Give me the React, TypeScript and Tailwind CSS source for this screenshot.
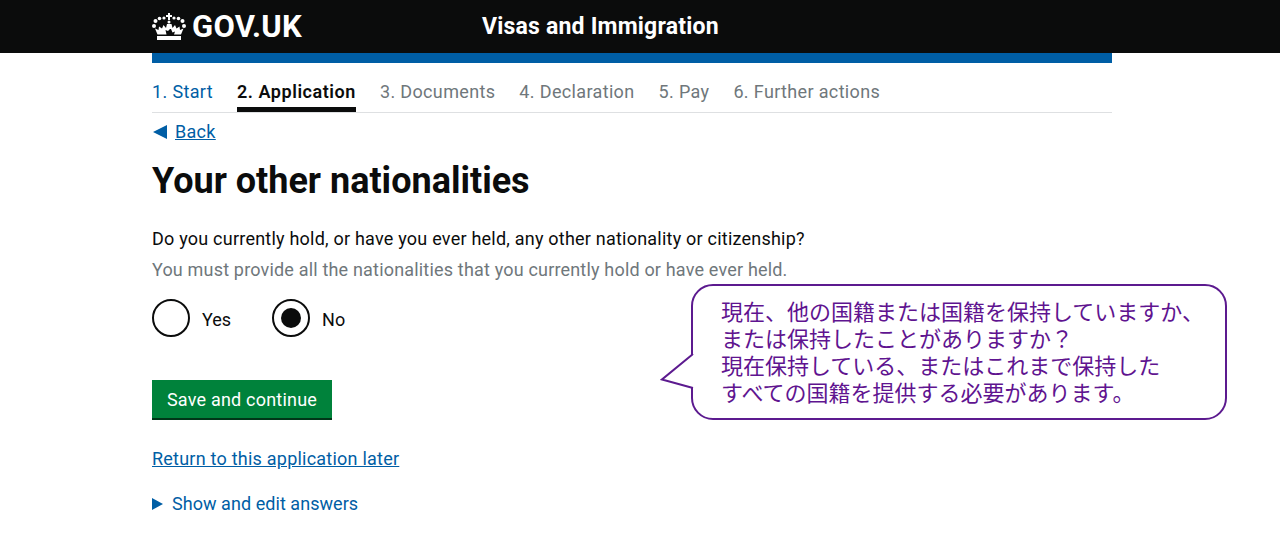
const UI_FONT = 'font-["Roboto",sans-serif]'

function Crown() {
  return (
    <svg width="34" height="27" viewBox="0 0 34 27" fill="#fff" aria-hidden="true">
      <path d="M16 0h2v2h2v2h-2v3h-2V4h-2V2h2z" />
      <circle cx="17" cy="9" r="1.500" />
      <circle cx="12" cy="5" r="1.600" />
      <circle cx="22" cy="5" r="1.600" />
      <circle cx="7.500" cy="5.500" r="1.800" />
      <circle cx="26.500" cy="5.500" r="1.800" />
      <circle cx="3.500" cy="8" r="2" />
      <circle cx="30.500" cy="8" r="2" />
      <circle cx="2" cy="13" r="2" />
      <circle cx="32" cy="13" r="2" />
      <path d="M5 23h24v4H5z" />
      <path d="M5.500 21.500L3 15.500l3.500 1.500.5-3.500 3 2 1.500-3.500 2.500 3 1-4h4.500l1 4 2.500-3 1.500 3.500 3-2 .5 3.500 3.500-1.500-2.500 6h-7l1-3-2.500 1-1.500-3.500h-1L16 18l-2.500-1 1 4.500z" />
    </svg>
  )
}

function Radio({ label, checked }: { label: string; checked?: boolean }) {
  return (
    <div className="flex items-center gap-3">
      <span className="w-[38px] h-[38px] rounded-full border-2 border-[#0b0c0c] flex items-center justify-center">
        {checked && <span className="w-[20px] h-[20px] rounded-full bg-[#0b0c0c]" />}
      </span>
      <span className="pt-[2px] text-[18px] leading-[25px] text-[#0b0c0c]">{label}</span>
    </div>
  )
}

const STEPS = ['1. Start', '2. Application', '3. Documents', '4. Declaration', '5. Pay', '6. Further actions']

export default function App() {
  return (
    <div className={`relative w-[1280px] h-[550px] overflow-hidden bg-white ${UI_FONT}`}>
      <header className="h-[53px] bg-[#0b0c0c] pl-[152px] flex items-center">
        <div className="w-[330px] flex items-center gap-[6px]">
          <Crown />
          <span className="text-[31px] leading-none font-bold text-white tracking-[0.3px]">GOV.UK</span>
        </div>
        <span className="pt-[2px] text-[23px] font-bold text-white tracking-[0.2px]">Visas and Immigration</span>
      </header>

      <main className="w-[960px] ml-[152px]">
        <div className="h-[10px] bg-[#005ea5]" />

        <nav className="h-[50px] flex items-end gap-[24px] border-b border-[#dee0e2]">
          {STEPS.map((s, i) => (
            <span
              key={s}
              className={`h-[39px] pt-[6px] text-[18px] leading-[25px] ${
                i === 1
                  ? 'font-semibold text-[#0b0c0c] border-b-[5px] border-[#0b0c0c] tracking-[0.55px]'
                  : i === 0
                    ? 'text-[#005ea5] tracking-[0.35px]'
                    : 'text-[#6f777b] tracking-[0.35px]'
              }`}
            >
              {s}
            </span>
          ))}
        </nav>

        <a className="mt-[6px] flex items-center gap-[8px] text-[18px] leading-[25px] text-[#005ea5] tracking-[0.3px]">
          <span className="ml-[1px] w-0 h-0 border-y-[7px] border-y-transparent border-r-[14px] border-r-[#005ea5]" />
          <span className="underline">Back</span>
        </a>

        <h1 className="mt-[16px] text-[36px] leading-[42px] font-bold text-[#0b0c0c]">
          Your other nationalities
        </h1>

        <p className="mt-[24px] text-[18px] leading-[25px] text-[#0b0c0c] tracking-[0.22px]">
          Do you currently hold, or have you ever held, any other nationality or citizenship?
        </p>
        <p className="mt-[6px] text-[18px] leading-[25px] text-[#6f777b] tracking-[0.18px]">
          You must provide all the nationalities that you currently hold or have ever held.
        </p>

        <div className="mt-[17px] flex gap-[41px]">
          <Radio label="Yes" />
          <Radio label="No" checked />
        </div>

        <button
          type="button"
          className="mt-[43px] block w-[180px] h-[40px] bg-[#00823b] border-b-2 border-[#003618] text-[18px] leading-[25px] text-white tracking-[0.2px]"
        >
          Save and continue
        </button>

        <a className="mt-[26px] block text-[18px] leading-[25px] text-[#005ea5] underline tracking-[0.23px]">
          Return to this application later
        </a>

        <div className="mt-[20px] flex items-center gap-[9px] text-[18px] leading-[25px] text-[#005ea5] tracking-[0.05px]">
          <span className="w-0 h-0 border-y-[6px] border-y-transparent border-l-[11px] border-l-[#005ea5]" />
          <span>Show and edit answers</span>
        </div>
      </main>

      {/* callout overlay */}
      <div className="absolute left-[691px] top-[284px] w-[536px] h-[136px] rounded-[22px] border-2 border-[#5c1a8f] bg-white pl-[28px] pt-[11px]">
        <svg className="absolute left-[-33px] top-[67px]" width="35" height="42" viewBox="0 0 35 42" aria-hidden="true">
          <path d="M33 1L2 26.500L33 35" fill="#fff" stroke="#5c1a8f" strokeWidth="2" />
          <path d="M33 2h3v32h-3z" fill="#fff" />
        </svg>
        <p className='font-["Noto_Sans_CJK_JP",sans-serif] font-normal text-[22px] leading-[27px] text-[#5f1490] whitespace-pre'>
          {'現在、他の国籍または国籍を保持していますか、\nまたは保持したことがありますか？\n現在保持している、またはこれまで保持した\nすべての国籍を提供する必要があります。'}
        </p>
      </div>
    </div>
  )
}
